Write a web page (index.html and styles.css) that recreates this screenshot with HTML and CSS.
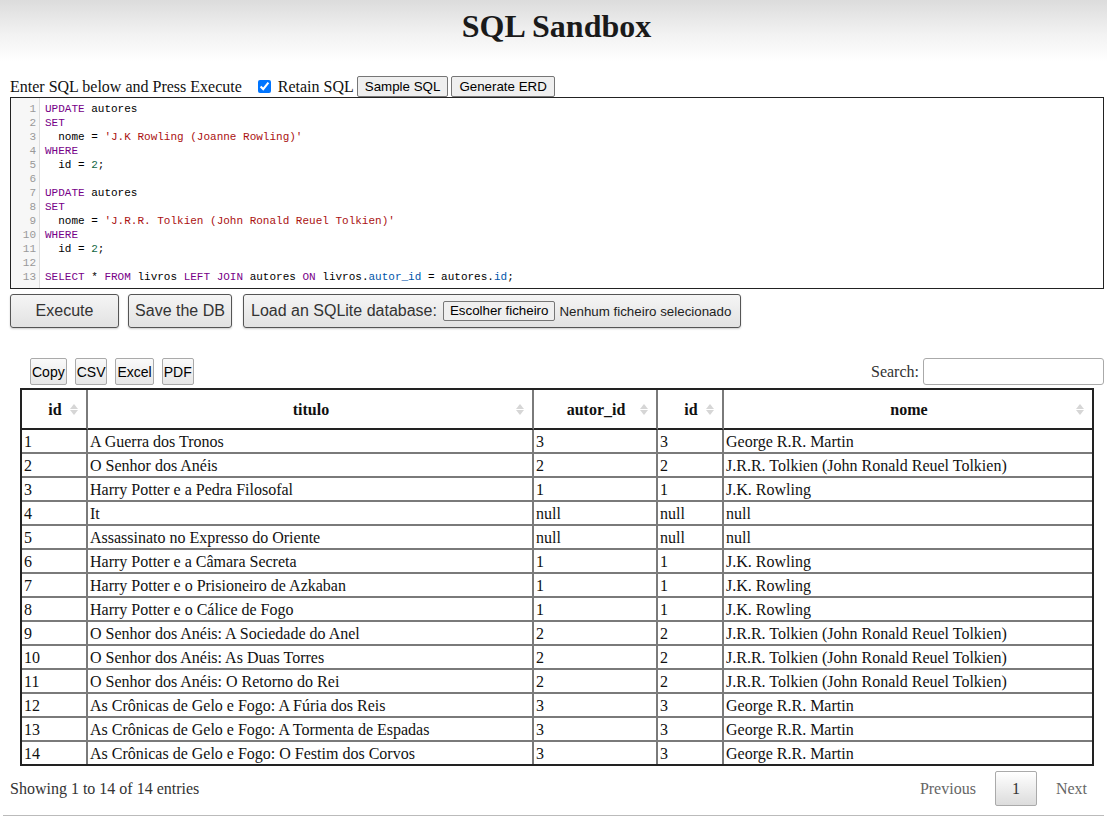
FILE: index.html
```html
<!DOCTYPE html>
<html>
<head>
<meta charset="utf-8">
<title>SQL Sandbox</title>
<link rel="stylesheet" href="styles.css">
</head>
<body>
<header class="top">
  <h1 class="title">SQL Sandbox</h1>
</header>
<main class="page">
  <div class="toolbar">
    <span class="lbl">Enter SQL below and Press Execute</span>
    <label class="retain"><input type="checkbox" checked> Retain SQL</label>
    <button class="nbtn">Sample SQL</button>
    <button class="nbtn">Generate ERD</button>
  </div>
  <div class="editor">
    <div class="gutter">
      <div>1</div><div>2</div><div>3</div><div>4</div><div>5</div><div>6</div><div>7</div><div>8</div><div>9</div><div>10</div><div>11</div><div>12</div><div>13</div>
    </div>
    <div class="code">
      <div class="ln"><span class="kw">UPDATE</span> autores</div>
      <div class="ln"><span class="kw">SET</span></div>
      <div class="ln">  nome = <span class="str">'J.K Rowling (Joanne Rowling)'</span></div>
      <div class="ln"><span class="kw">WHERE</span></div>
      <div class="ln">  id = <span class="num">2</span>;</div>
      <div class="ln"> </div>
      <div class="ln"><span class="kw">UPDATE</span> autores</div>
      <div class="ln"><span class="kw">SET</span></div>
      <div class="ln">  nome = <span class="str">'J.R.R. Tolkien (John Ronald Reuel Tolkien)'</span></div>
      <div class="ln"><span class="kw">WHERE</span></div>
      <div class="ln">  id = <span class="num">2</span>;</div>
      <div class="ln"> </div>
      <div class="ln"><span class="kw">SELECT</span> * <span class="kw">FROM</span> livros <span class="kw">LEFT</span> <span class="kw">JOIN</span> autores <span class="kw">ON</span> livros.<span class="var">autor_id</span> = autores.<span class="var">id</span>;</div>
    </div>
  </div>
  <div class="actions">
    <button class="bigbtn exec">Execute</button>
    <button class="bigbtn save">Save the DB</button>
    <div class="bigbtn load">Load an SQLite database: <span class="filebtn">Escolher ficheiro</span><span class="filetxt">Nenhum ficheiro selecionado</span></div>
  </div>

  <div class="dt">
    <div class="dt-top">
      <div class="dt-buttons">
        <button class="dtbtn">Copy</button>
        <button class="dtbtn">CSV</button>
        <button class="dtbtn">Excel</button>
        <button class="dtbtn">PDF</button>
      </div>
      <label class="search">Search: <input type="text" class="search-in"></label>
    </div>
    <table class="grid">
      <colgroup>
        <col class="c1"><col class="c2"><col class="c3"><col class="c4"><col class="c5">
      </colgroup>
      <thead>
        <tr>
          <th><div class="thc"><span></span><span>id</span><span class="sort"><i class="up"></i><i class="dn"></i></span></div></th>
          <th><div class="thc"><span></span><span>titulo</span><span class="sort"><i class="up"></i><i class="dn"></i></span></div></th>
          <th><div class="thc"><span></span><span>autor_id</span><span class="sort"><i class="up"></i><i class="dn"></i></span></div></th>
          <th><div class="thc"><span></span><span>id</span><span class="sort"><i class="up"></i><i class="dn"></i></span></div></th>
          <th><div class="thc"><span></span><span>nome</span><span class="sort"><i class="up"></i><i class="dn"></i></span></div></th>
        </tr>
      </thead>
      <tbody>
        <tr><td>1</td><td>A Guerra dos Tronos</td><td>3</td><td>3</td><td>George R.R. Martin</td></tr>
        <tr><td>2</td><td>O Senhor dos Anéis</td><td>2</td><td>2</td><td>J.R.R. Tolkien (John Ronald Reuel Tolkien)</td></tr>
        <tr><td>3</td><td>Harry Potter e a Pedra Filosofal</td><td>1</td><td>1</td><td>J.K. Rowling</td></tr>
        <tr><td>4</td><td>It</td><td>null</td><td>null</td><td>null</td></tr>
        <tr><td>5</td><td>Assassinato no Expresso do Oriente</td><td>null</td><td>null</td><td>null</td></tr>
        <tr><td>6</td><td>Harry Potter e a Câmara Secreta</td><td>1</td><td>1</td><td>J.K. Rowling</td></tr>
        <tr><td>7</td><td>Harry Potter e o Prisioneiro de Azkaban</td><td>1</td><td>1</td><td>J.K. Rowling</td></tr>
        <tr><td>8</td><td>Harry Potter e o Cálice de Fogo</td><td>1</td><td>1</td><td>J.K. Rowling</td></tr>
        <tr><td>9</td><td>O Senhor dos Anéis: A Sociedade do Anel</td><td>2</td><td>2</td><td>J.R.R. Tolkien (John Ronald Reuel Tolkien)</td></tr>
        <tr><td>10</td><td>O Senhor dos Anéis: As Duas Torres</td><td>2</td><td>2</td><td>J.R.R. Tolkien (John Ronald Reuel Tolkien)</td></tr>
        <tr><td>11</td><td>O Senhor dos Anéis: O Retorno do Rei</td><td>2</td><td>2</td><td>J.R.R. Tolkien (John Ronald Reuel Tolkien)</td></tr>
        <tr><td>12</td><td>As Crônicas de Gelo e Fogo: A Fúria dos Reis</td><td>3</td><td>3</td><td>George R.R. Martin</td></tr>
        <tr><td>13</td><td>As Crônicas de Gelo e Fogo: A Tormenta de Espadas</td><td>3</td><td>3</td><td>George R.R. Martin</td></tr>
        <tr><td>14</td><td>As Crônicas de Gelo e Fogo: O Festim dos Corvos</td><td>3</td><td>3</td><td>George R.R. Martin</td></tr>
      </tbody>
    </table>
    <div class="dt-bottom">
      <div class="info">Showing 1 to 14 of 14 entries</div>
      <div class="paging">
        <span class="pg dis">Previous</span>
        <span class="pg cur">1</span>
        <span class="pg dis">Next</span>
      </div>
    </div>
  </div>
  <div class="rule"></div>
</main>
</body>
</html>
```
FILE: styles.css
```css
* { box-sizing: border-box; }
html, body { margin: 0; padding: 0; background: #fff; }
body { font-family: "Liberation Serif", "Times New Roman", serif; font-size: 16px; color: #111; }

.top {
  height: 62px;
  background: linear-gradient(to bottom, #dcdcdc 0%, #f2f2f2 55%, #ffffff 100%);
  padding-top: 8px;
}
.title {
  margin: 0;
  text-align: center;
  font-size: 32px;
  line-height: 37px;
  font-weight: bold;
  color: #1a1a1a;
  padding-left: 6px;
}

.page { padding: 0 3px 0 10px; }

.toolbar {
  margin-top: 14px;
  height: 21px;
  display: flex;
  align-items: center;
}
.lbl { margin-right: 16px; }
.retain { display: flex; align-items: center; margin-right: 3px; }
.retain input { margin: 0 7px 0 0; width: 13px; height: 13px; }
.nbtn {
  font-family: "Liberation Sans", Arial, sans-serif;
  font-size: 13.33px;
  height: 21px;
  padding: 0 7px;
  background: #efefef;
  border: 1px solid #767676;
  border-radius: 2px;
  color: #000;
  margin-right: 3px;
}

.editor {
  height: 192px;
  border: 1px solid #222;
  display: flex;
  background: #fff;
  font-family: "Liberation Mono", "DejaVu Sans Mono", monospace;
  font-size: 11px;
  line-height: 14px;
}
.gutter {
  width: 29px;
  background: #f7f7f7;
  border-right: 1px solid #ddd;
  color: #999;
  text-align: right;
  padding: 4px 3px 0 0;
}
.code {
  padding: 4px 0 0 5px;
  color: #000;
}
.ln { white-space: pre; height: 14px; }
.kw { color: #770088; }
.str { color: #aa1111; }
.num { color: #116644; }
.var { color: #0055aa; }

.actions {
  margin-top: 5px;
  display: flex;
  align-items: center;
}
.bigbtn {
  height: 34px;
  font-family: "Liberation Sans", Arial, sans-serif;
  font-size: 16px;
  color: #333;
  background: linear-gradient(to bottom, #f5f5f5, #e2e2e2);
  border: 1px solid #555;
  border-radius: 3px;
  box-shadow: 0 1px 2px rgba(0,0,0,0.2);
  display: flex;
  align-items: center;
  justify-content: center;
}
.exec { width: 109px; margin-right: 9px; }
.save { width: 104px; margin-right: 11px; }
.load { width: 498px; justify-content: flex-start; padding-left: 7px; }
.filebtn {
  font-size: 13.33px;
  color: #000;
  height: 20px;
  line-height: 18px;
  padding: 0 6px;
  margin-left: 6px;
  background: #efefef;
  border: 1px solid #767676;
  border-radius: 2px;
}
.filetxt { font-size: 13.33px; color: #222; margin-left: 4px; }

.dt { margin-top: 30px; }
.dt-top {
  display: flex;
  justify-content: space-between;
  align-items: center;
  height: 27px;
  margin-bottom: 3px;
}
.dt-buttons { display: flex; margin-left: 20px; }
.dtbtn {
  font-family: "Liberation Sans", Arial, sans-serif;
  font-size: 14px;
  height: 27px;
  padding: 0 1px;
  margin-right: 8px;
  color: #000;
  background: linear-gradient(to bottom, #fafafa, #e6e6e6);
  border: 1px solid #aaa;
  border-radius: 2px;
}
.search { display: flex; align-items: center; color: #333; }
.search-in {
  margin-left: 4px;
  width: 181px;
  height: 27px;
  border: 1px solid #aaa;
  border-radius: 3px;
  background: #fff;
}

.grid {
  margin: 0 10px;
  width: 1074px;
  table-layout: fixed;
  border-collapse: separate;
  border-spacing: 0;
  border: 2px solid #222;
}
.c1 { width: 66px; }
.c2 { width: 446px; }
.c3 { width: 124px; }
.c4 { width: 66px; }
.c5 { width: 368px; }
.grid th, .grid td {
  border-right: 2px solid #7a7a7a;
  text-align: left;
}
.grid th:last-child, .grid td:last-child { border-right: none; }
.grid th {
  height: 40px;
  padding: 1px 8px 0 10px;
  border-bottom: 2px solid #222;
  font-weight: bold;
}
.thc {
  display: grid;
  grid-template-columns: 1fr auto 1fr;
  align-items: center;
}
.sort { justify-self: end; display: flex; flex-direction: column; gap: 1px; }
.sort i { display: block; width: 0; height: 0; border-left: 4px solid transparent; border-right: 4px solid transparent; }
.sort .up { border-bottom: 5px solid #d6d6d6; }
.sort .dn { border-top: 5px solid #d6d6d6; }
.grid td {
  height: 24px;
  padding: 2px 2px 0 2px;
  line-height: 20px;
  white-space: nowrap;
}
.grid tbody tr:first-child td { height: 22px; padding-top: 1px; }
.grid tbody tr + tr td { border-top: 2px solid #7a7a7a; }

.dt-bottom {
  margin-top: 5px;
  display: flex;
  justify-content: space-between;
  align-items: center;
  height: 35px;
}
.info { color: #333; }
.paging { display: flex; align-items: center; }
.dis { color: #666; }
.paging .dis:first-child { margin-right: 19px; }
.cur {
  width: 42px;
  height: 35px;
  display: flex;
  align-items: center;
  justify-content: center;
  color: #333;
  background: linear-gradient(to bottom, #ffffff, #dcdcdc);
  border: 1px solid #aaa;
  border-radius: 2px;
  margin-right: 19px;
}
.paging .dis:last-child { margin-right: 17px; }
.rule { margin-top: 9px; border-top: 1px solid #bbb; margin-left: -7px; }
```
